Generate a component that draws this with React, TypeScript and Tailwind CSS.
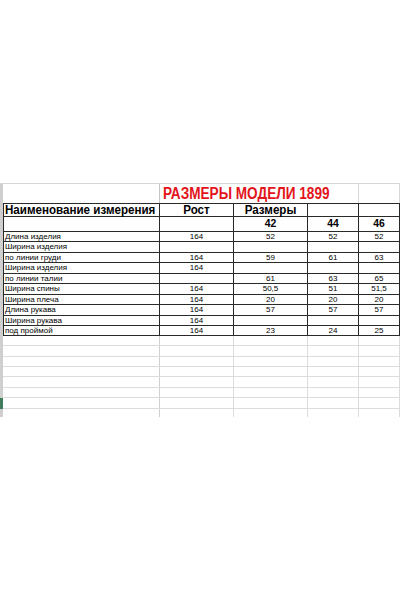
import React from "react";

const font = { fontFamily: '"Liberation Sans", Arial, sans-serif' };

type Row = { a: string; b: string; c: string; d: string; e: string; h: string };

const data: Row[] = [
  { a: "Длина изделия", b: "164", c: "52", d: "52", e: "52", h: "h-[10px]" },
  { a: "Ширина изделия", b: "", c: "", d: "", e: "", h: "h-[11px]" },
  { a: "по линии груди", b: "164", c: "59", d: "61", e: "63", h: "h-[10px]" },
  { a: "Ширина изделия", b: "164", c: "", d: "", e: "", h: "h-[11px]" },
  { a: "по линии талии", b: "", c: "61", d: "63", e: "65", h: "h-[10px]" },
  { a: "Ширина спины", b: "164", c: "50,5", d: "51", e: "51,5", h: "h-[11px]" },
  { a: "Ширина плеча", b: "164", c: "20", d: "20", e: "20", h: "h-[10px]" },
  { a: "Длина рукава", b: "164", c: "57", d: "57", e: "57", h: "h-[11px]" },
  { a: "Ширина рукава", b: "164", c: "", d: "", e: "", h: "h-[10px]" },
  { a: "под проймой", b: "164", c: "23", d: "24", e: "25", h: "h-[10px]" },
];

const empties = [
  { h: "h-[10px]", line: true, green: false },
  { h: "h-[11px]", line: true, green: false },
  { h: "h-[10px]", line: true, green: false },
  { h: "h-[10px]", line: true, green: false },
  { h: "h-[11px]", line: true, green: false },
  { h: "h-[10px]", line: true, green: false },
  { h: "h-[11px]", line: true, green: true },
  { h: "h-[8px]", line: false, green: false },
];

export default function App() {
  return (
    <div className="w-[400px] h-[600px] bg-white overflow-hidden text-black" style={font}>
      <div className="h-[183px]" />

      {/* Title row */}
      <div className="flex h-[20px] border-t border-[#d6d6d6]">
        <div className="w-[3px] bg-[#cfcfcf]" />
        <div className="w-[157px] border-r border-[#c4c4c4]" />
        <div className="w-[199px] border-r border-[#d6d6d6] flex items-center pl-[3px]">
          <span className="inline-block scale-y-[1.2] text-[13.6px] font-bold text-[#e3141b] leading-none whitespace-nowrap">
            РАЗМЕРЫ МОДЕЛИ 1899
          </span>
        </div>
        <div className="w-[41px] border-r border-[#d6d6d6]" />
      </div>

      {/* Header row */}
      <div className="flex h-[14px]">
        <div className="w-[3px] bg-[#cfcfcf]" />
        <div className="flex flex-1 border-t border-b border-[#2a2a2a]">
          <div className="w-[157px] border-l border-r border-[#2a2a2a] flex items-center pl-[1px]">
            <span className="inline-block scale-y-[1.1] text-[11.6px] font-bold leading-none whitespace-nowrap">Наименование измерения</span>
          </div>
          <div className="w-[74px] border-r border-[#2a2a2a] flex items-center justify-center">
            <span className="inline-block scale-y-[1.1] text-[11.6px] font-bold leading-none">Рост</span>
          </div>
          <div className="w-[74px] border-r border-[#2a2a2a] flex items-center justify-center">
            <span className="inline-block scale-y-[1.1] text-[11.6px] font-bold leading-none">Размеры</span>
          </div>
          <div className="w-[51px] border-r border-[#2a2a2a]" />
          <div className="w-[41px] border-r border-[#2a2a2a]" />
        </div>
      </div>

      {/* Sizes row */}
      <div className="flex h-[15px]">
        <div className="w-[3px] bg-[#cfcfcf]" />
        <div className="flex flex-1 border-b border-[#2a2a2a]">
          <div className="w-[157px] border-l border-r border-[#2a2a2a]" />
          <div className="w-[74px] border-r border-[#2a2a2a]" />
          <div className="w-[74px] border-r border-[#2a2a2a] flex items-center justify-center pt-[1px]">
            <span className="text-[10.4px] font-bold leading-none">42</span>
          </div>
          <div className="w-[51px] border-r border-[#2a2a2a] flex items-center justify-center pt-[1px]">
            <span className="text-[10.4px] font-bold leading-none">44</span>
          </div>
          <div className="w-[41px] border-r border-[#2a2a2a] flex items-center justify-center pt-[1px]">
            <span className="text-[10.4px] font-bold leading-none">46</span>
          </div>
        </div>
      </div>

      {/* Data rows */}
      {data.map((r, i) => (
        <div key={i} className={`flex ${r.h}`}>
          <div className="w-[3px] bg-[#cfcfcf]" />
          <div className="flex flex-1 border-b border-[#2a2a2a] text-[8px] leading-none">
            <div className="w-[157px] border-l border-r border-[#2a2a2a] flex items-center pl-[1px] whitespace-nowrap">
              {r.a}
            </div>
            <div className="w-[74px] border-r border-[#2a2a2a] flex items-center justify-center">{r.b}</div>
            <div className="w-[74px] border-r border-[#2a2a2a] flex items-center justify-center">{r.c}</div>
            <div className="w-[51px] border-r border-[#2a2a2a] flex items-center justify-center">{r.d}</div>
            <div className="w-[41px] border-r border-[#2a2a2a] flex items-center justify-center">{r.e}</div>
          </div>
        </div>
      ))}

      {/* Empty grid rows */}
      {empties.map((r, i) => (
        <div key={i} className={`flex ${r.h}`}>
          <div className={`w-[3px] ${r.green ? "bg-[#3f7d5c]" : "bg-[#cfcfcf]"}`} />
          <div className={`flex flex-1 ${r.line ? "border-b border-[#dcdcdc]" : ""}`}>
            <div className="w-[157px] border-r border-[#d0d0d0]" />
            <div className="w-[74px] border-r border-[#dcdcdc]" />
            <div className="w-[74px] border-r border-[#dcdcdc]" />
            <div className="w-[51px] border-r border-[#dcdcdc]" />
            <div className="w-[41px] border-r border-[#dcdcdc]" />
          </div>
        </div>
      ))}
    </div>
  );
}
